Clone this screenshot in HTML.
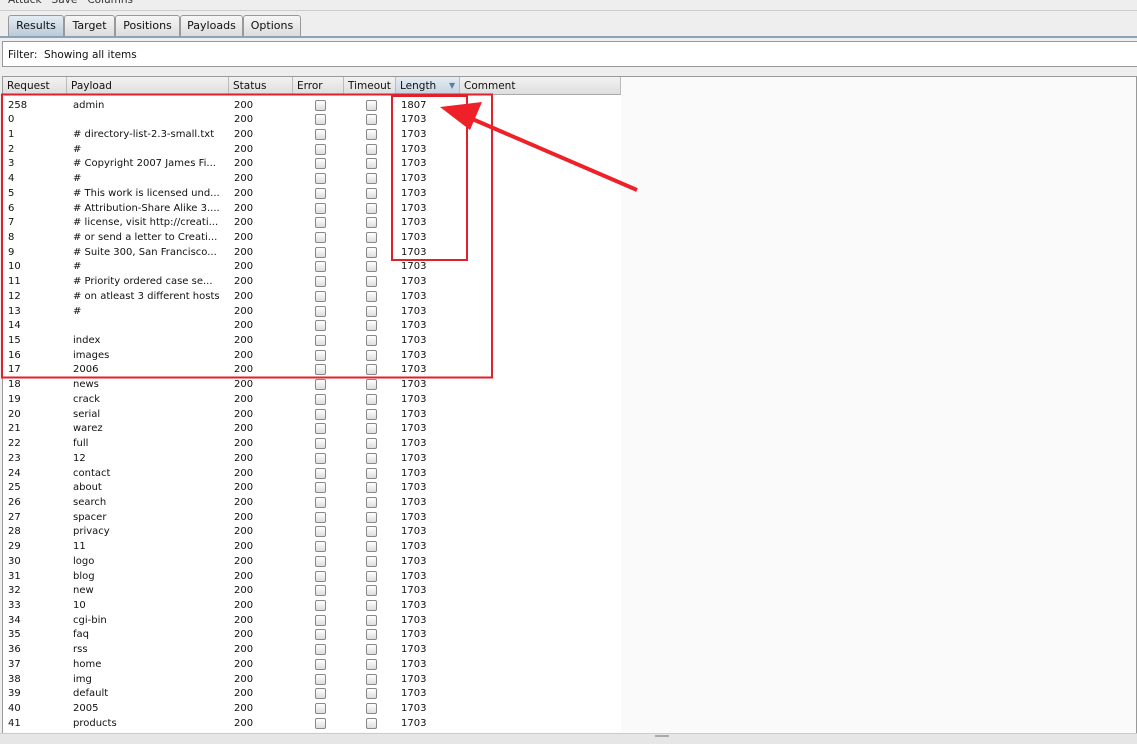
<!DOCTYPE html><html><head><style>
body{margin:0;width:1137px;height:743px;background:#eeeeee;font-family:"DejaVu Sans","Liberation Sans",sans-serif;font-size:10px;color:#111;position:relative;overflow:hidden}
.a{position:absolute}
.tab{position:absolute;top:15px;height:20px;border:1px solid #999;border-bottom:none;border-radius:3px 3px 0 0;background:linear-gradient(#f6f6f6,#dcdcdc);line-height:20px;text-align:center;font-size:11px}
.hd{position:absolute;top:77px;height:18px;line-height:18px;border-right:1px solid #bbb;background:linear-gradient(#f2f2f2,#dedede);border-bottom:1px solid #aaa;padding-left:4px;box-sizing:border-box;font-size:10.5px}
.r{position:absolute;left:3px;width:618px;height:15px;line-height:15px;font-size:10px}
.r span{position:absolute}
.cb{position:absolute;width:9px;height:9px;border:1px solid #888;border-radius:2px;background:linear-gradient(#fff,#ddd);top:2px}
</style></head><body>
<div class="a" style="top:-6px;left:8px;font-size:10.5px;color:#333">Attack&nbsp;&nbsp; Save&nbsp;&nbsp; Columns</div>
<div class="a" style="top:10px;left:0;width:1137px;height:1px;background:#ccc"></div>
<div class="tab" style="left:8px;width:54px;background:linear-gradient(#e4ecf3,#b9cad8)">Results</div>
<div class="tab" style="left:64px;width:49px">Target</div>
<div class="tab" style="left:115px;width:63px">Positions</div>
<div class="tab" style="left:180px;width:61px">Payloads</div>
<div class="tab" style="left:243px;width:56px">Options</div>
<div class="a" style="top:36px;left:0;width:1137px;height:2px;background:#8aa3b8"></div>
<div class="a" style="top:41px;left:2px;width:1140px;height:26px;border:1px solid #999;background:#fff;line-height:26px;padding-left:5px;box-sizing:border-box;font-size:10.5px">Filter:&nbsp; Showing all items</div>
<div class="a" style="top:76px;left:2px;width:1133px;height:656px;border:1px solid #999;background:#fafafa"></div>
<div class="a" style="top:77px;left:3px;width:618px;height:655px;background:#fff"></div>
<div class="hd" style="left:3px;width:64px">Request</div>
<div class="hd" style="left:67px;width:162px">Payload</div>
<div class="hd" style="left:229px;width:64px">Status</div>
<div class="hd" style="left:293px;width:51px">Error</div>
<div class="hd" style="left:344px;width:52px">Timeout</div>
<div class="hd" style="left:396px;width:64px;background:linear-gradient(#e4ecf3,#c6d4e0)">Length<span style="position:absolute;left:53px;color:#5a7fa8;font-size:8px">▼</span></div>
<div class="hd" style="left:460px;width:161px">Comment</div>
<div id="rows"></div>
<div class="a" style="top:733px;left:0;width:1137px;height:10px;background:#e6e6e6;border-top:1px solid #ccc"></div>
<div class="a" style="top:735px;left:655px;width:14px;height:2px;background:#aaa"></div>
<svg class="a" style="left:0;top:0" width="1137" height="743">
<rect x="2" y="94.5" width="490" height="283" fill="none" stroke="#e0202a" stroke-width="2"/>
<rect x="392" y="96" width="75" height="164" fill="none" stroke="#e0202a" stroke-width="2"/>
<line x1="637" y1="190" x2="470" y2="118" stroke="#ee2028" stroke-width="4"/>
<polygon points="440,107 482,102 470,130" fill="#ee2028"/>
</svg>
<script>
var d=[["258","admin"],["0",""],["1","# directory-list-2.3-small.txt"],["2","#"],["3","# Copyright 2007 James Fi..."],["4","#"],["5","# This work is licensed und..."],["6","# Attribution-Share Alike 3...."],["7","# license, visit http://creati..."],["8","# or send a letter to Creati..."],["9","# Suite 300, San Francisco..."],["10","#"],["11","# Priority ordered case se..."],["12","# on atleast 3 different hosts"],["13","#"],["14",""],["15","index"],["16","images"],["17","2006"],["18","news"],["19","crack"],["20","serial"],["21","warez"],["22","full"],["23","12"],["24","contact"],["25","about"],["26","search"],["27","spacer"],["28","privacy"],["29","11"],["30","logo"],["31","blog"],["32","new"],["33","10"],["34","cgi-bin"],["35","faq"],["36","rss"],["37","home"],["38","img"],["39","default"],["40","2005"],["41","products"]];
var h="";d.forEach(function(r,i){var y=97.5+i*14.72;h+='<div class="r" style="top:'+y+'px"><span style="left:5px">'+r[0]+'</span><span style="left:70px">'+r[1]+'</span><span style="left:231px">200</span><div class="cb" style="left:312px"></div><div class="cb" style="left:363px"></div><span style="left:398px">'+(i==0?"1807":"1703")+'</span></div>';});
document.getElementById("rows").innerHTML=h;
</script>
</body></html>
